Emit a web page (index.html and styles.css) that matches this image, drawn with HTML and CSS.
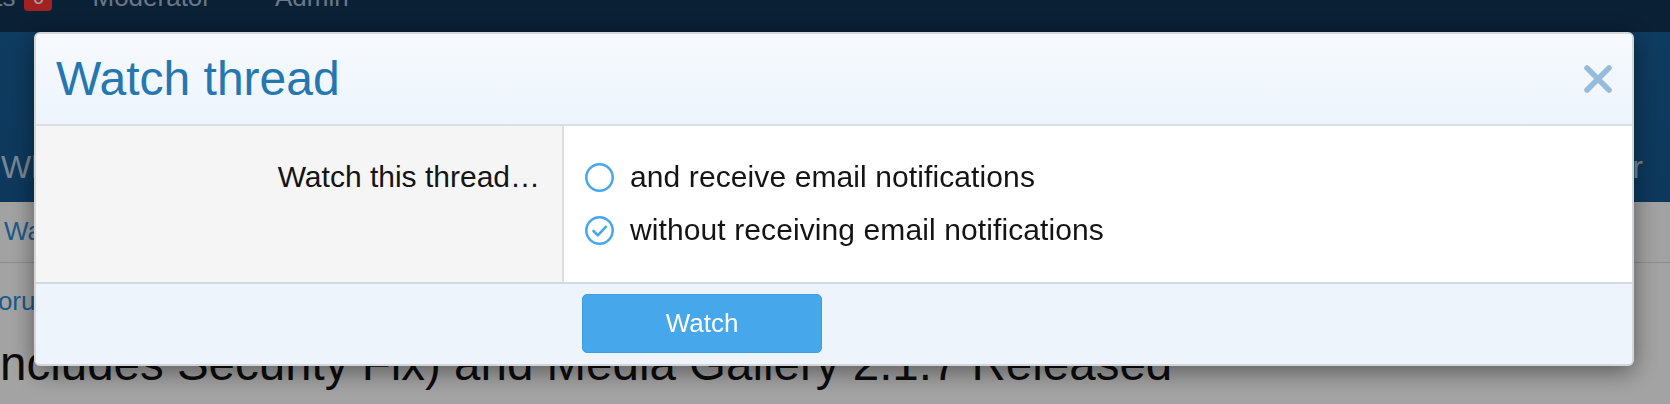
FILE: index.html
```html
<!DOCTYPE html>
<html lang="en">
<head>
<meta charset="utf-8">
<title>Watch thread</title>
<link rel="stylesheet" href="styles.css">
</head>
<body>
<div class="page">
  <div class="topbar">
    <div class="topnav">
      <span class="tn-item">Alerts</span><span class="badge">0</span>
      <span class="tn-item tn-mod">Moderator</span>
      <span class="tn-item tn-admin">Admin</span>
    </div>
  </div>
  <div class="navband">
    <div class="tabs">
      <span class="tab">What's new</span>
      <span class="tab">Newsletter</span>
    </div>
  </div>
  <div class="subnav"><span class="sublink">Watched threads</span></div>
  <div class="crumbs"><span class="crumb">Forums</span></div>
  <h1 class="ptitle">(Includes Security Fix) and Media Gallery 2.1.7 Released</h1>
</div>

<div class="overlay">
  <div class="dialog">
    <div class="dlg-head">
      <h2 class="dlg-title">Watch thread</h2>
      <span class="dlg-close">
        <svg width="30" height="30" viewBox="0 0 30 30"><path d="M4 4L26 26M26 4L4 26" stroke="#95bcda" stroke-width="5.5" stroke-linecap="round" fill="none"/></svg>
      </span>
    </div>
    <div class="form-row">
      <div class="form-label">Watch this thread…</div>
      <div class="form-input">
        <ul class="choices">
          <li class="choice">
            <svg class="radio" width="29" height="29" viewBox="0 0 29 29"><circle cx="14.5" cy="14.5" r="13.2" fill="none" stroke="#47a7eb" stroke-width="2.5"/></svg>
            <span>and receive email notifications</span>
          </li>
          <li class="choice">
            <svg class="radio" width="29" height="29" viewBox="0 0 29 29"><circle cx="14.5" cy="14.5" r="13.2" fill="none" stroke="#47a7eb" stroke-width="2.5"/><path d="M8.5 15L12.8 19.3L20.8 10.8" fill="none" stroke="#47a7eb" stroke-width="2.6" stroke-linecap="round" stroke-linejoin="round"/></svg>
            <span>without receiving email notifications</span>
          </li>
        </ul>
      </div>
    </div>
    <div class="form-submit">
      <div></div>
      <div class="submit-cell"><button class="btn" type="button">Watch</button></div>
    </div>
  </div>
</div>
</body>
</html>
```

FILE: styles.css
```css
html, body {
  margin: 0;
  padding: 0;
}
body {
  width: 1670px;
  height: 404px;
  overflow: hidden;
  background: #ffffff;
  font-family: "Liberation Sans", Arial, sans-serif;
}

.page {
  width: 1670px;
}

/* top dark bar */
.topbar {
  height: 32px;
  background: #113253;
  overflow: hidden;
}
.topnav {
  display: flex;
  align-items: center;
  margin-top: -17px;
  margin-left: -51px;
  font-size: 26px;
  line-height: 26px;
  color: #a7bad0;
  white-space: nowrap;
}
.badge {
  margin-left: 9px;
  width: 28px;
  height: 28px;
  border-radius: 4px;
  background: #ff3535;
  color: #ffffff;
  font-size: 20px;
  line-height: 28px;
  text-align: center;
}
.tn-mod { margin-left: 40px; }
.tn-admin { margin-left: 64px; }

/* blue header + nav */
.navband {
  height: 170px;
  background: linear-gradient(180deg, #175d96 0%, #155890 100%);
  box-sizing: border-box;
  padding-top: 115px;
}
.tabs {
  display: flex;
  justify-content: space-between;
  margin-left: 1px;
  margin-right: 27px;
  font-size: 32px;
  line-height: 40px;
  color: #bcd3e6;
  white-space: nowrap;
}

/* sub nav */
.subnav {
  height: 61px;
  box-sizing: border-box;
  padding-top: 16px;
  padding-left: 4px;
  background: #fdfdfd;
  border-bottom: 1px solid #dcdcdc;
  font-size: 26px;
  line-height: 26px;
  color: #2d8ed9;
}

.crumbs {
  padding-top: 23px;
  margin-left: -18px;
  font-size: 26px;
  line-height: 30px;
  color: #2d8ed9;
}

.ptitle {
  margin: 20px 0 0 -29px;
  font-size: 47.5px;
  line-height: 56px;
  font-weight: normal;
  color: #141414;
  white-space: nowrap;
}

/* overlay */
.overlay {
  position: fixed;
  inset: 0;
  background: rgba(0, 0, 0, 0.36);
}
.dialog {
  margin: 32px 0 0 34px;
  width: 1600px;
  box-sizing: border-box;
  border: 2px solid #d4d7da;
  border-radius: 6px;
  overflow: hidden;
  background: #ffffff;
  box-shadow: 0 6px 24px rgba(0, 0, 0, 0.45);
}
.dlg-head {
  height: 90px;
  display: flex;
  align-items: center;
  justify-content: space-between;
  padding: 0 19px 0 20px;
  background: linear-gradient(180deg, #f6fafe 0%, #edf4fc 100%);
  border-bottom: 2px solid #dcdfe2;
}
.dlg-title {
  margin: 0;
  font-size: 48px;
  line-height: 1;
  font-weight: normal;
  color: #2577b1;
}
.dlg-close {
  display: flex;
  width: 30px;
  height: 30px;
}

.form-row {
  display: grid;
  grid-template-columns: 528px 1fr;
  font-size: 30px;
  color: #141414;
}
.form-label {
  background: #f5f5f5;
  border-right: 2px solid #dedede;
  padding: 30px 22px 0 0;
  line-height: 42px;
  text-align: right;
}
.form-input {
  padding: 30px 20px 31px 21px;
}
.choices {
  list-style: none;
  margin: 0;
  padding: 0;
  display: flex;
  flex-direction: column;
  gap: 11px;
}
.choice {
  display: flex;
  align-items: center;
  gap: 16px;
  line-height: 42px;
  letter-spacing: 0.1px;
}
.radio {
  flex: none;
}

.form-submit {
  display: grid;
  grid-template-columns: 528px 1fr;
  padding: 10px 0 11px;
  background: #edf4fc;
  border-top: 2px solid #d6d9dc;
}
.submit-cell {
  padding-left: 18px;
}
.btn {
  width: 240px;
  height: 59px;
  border: 1px solid #3c9de4;
  border-radius: 5px;
  background: #47a7eb;
  color: #ffffff;
  font-family: "Liberation Sans", Arial, sans-serif;
  font-size: 26px;
  padding: 0;
  cursor: pointer;
}
```
